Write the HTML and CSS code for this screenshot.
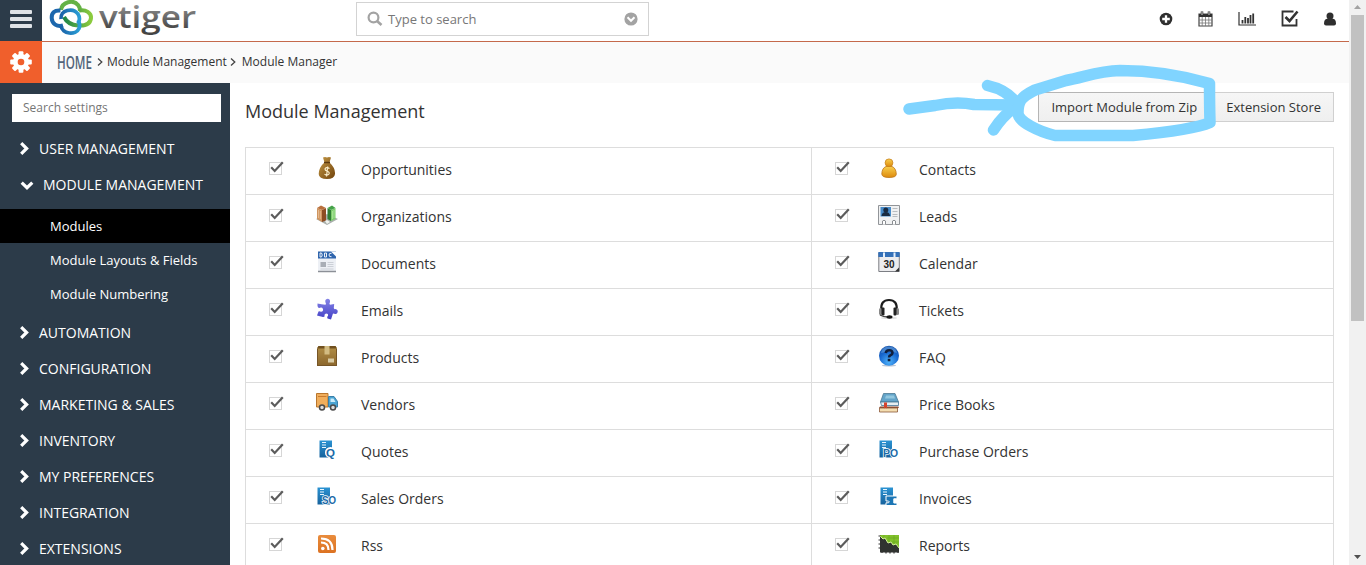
FILE: index.html
```html
<!DOCTYPE html>
<html lang="en">
<head>
<meta charset="utf-8">
<title>Module Manager</title>
<link rel="stylesheet" href="styles.css">
</head>
<body>
<svg class="defs" width="0" height="0">
  <defs>
    <linearGradient id="gGrey" x1="0" y1="0" x2="0" y2="1"><stop offset="0.15" stop-color="#9a9a9a"/><stop offset="0.85" stop-color="#444"/></linearGradient>
    <linearGradient id="gLeft" x1="0" y1="0" x2="1" y2="0"><stop offset="0" stop-color="#1b62a8"/><stop offset="1" stop-color="#2a9fd6"/></linearGradient>
    <linearGradient id="gRight" x1="0" y1="0" x2="1" y2="0"><stop offset="0" stop-color="#1d8448"/><stop offset="1" stop-color="#8ccb3e"/></linearGradient>
    <linearGradient id="gBag" x1="0" y1="0" x2="1" y2="1"><stop offset="0" stop-color="#c69a46"/><stop offset="1" stop-color="#71430c"/></linearGradient>
    <linearGradient id="gGold" x1="0" y1="0" x2="0" y2="1"><stop offset="0" stop-color="#f9cf4e"/><stop offset="1" stop-color="#dd8a0c"/></linearGradient>
    <linearGradient id="gPuzzle" x1="0" y1="0" x2="0" y2="1"><stop offset="0" stop-color="#8584e6"/><stop offset="1" stop-color="#4340c6"/></linearGradient>
    <linearGradient id="gBox" x1="0" y1="0" x2="0" y2="1"><stop offset="0" stop-color="#b39048"/><stop offset="1" stop-color="#8b662c"/></linearGradient>
    <linearGradient id="gBlue" x1="0" y1="0" x2="0" y2="1"><stop offset="0" stop-color="#2b93d3"/><stop offset="1" stop-color="#17629c"/></linearGradient>
    <radialGradient id="gFaq" cx="0.5" cy="0.8" r="0.8"><stop offset="0" stop-color="#4fb3fb"/><stop offset="0.6" stop-color="#1767cf"/><stop offset="1" stop-color="#1550a8"/></radialGradient>
    <linearGradient id="gRss" x1="0" y1="0" x2="0" y2="1"><stop offset="0" stop-color="#e98c3d"/><stop offset="1" stop-color="#dc7222"/></linearGradient>
  </defs>
  <symbol id="check" viewBox="0 0 16 14">
    <rect x="0.5" y="1.5" width="12" height="12" fill="#fff" stroke="#d6d6d6"/>
    <path d="M2.2 6.300 L5.700 10 L13.800 1.200" fill="none" stroke="#5c5c5c" stroke-width="2.200"/>
  </symbol>
  <symbol id="chev" viewBox="0 0 9 13"><path d="M1.2 1.2 6.6 6.5 1.2 11.8" fill="none" stroke="#fff" stroke-width="3.2"/></symbol>
  <symbol id="money" viewBox="0 0 22 22">
    <path d="M7 .5 Q9 -.5 11 .5 Q13 -.5 15 .5 L13.500 5.500 Q19.500 11 19 17 Q18.500 22 11 22 Q3 22 2.700 17 Q3 10 8.500 5.500Z" fill="url(#gBag)"/>
    <path d="M8 5.500h6" stroke="#5c3a10" stroke-width="1.500"/>
    <path d="M13.500 11.500 Q10 9.500 9 12 Q9 13.500 11 14 Q13.800 15 13 17 Q11.500 19 8.500 17.300 M11.700 9.500 L10.500 19.500" fill="none" stroke="#fbeecb" stroke-width="1.200"/>
  </symbol>
  <symbol id="buildings" viewBox="0 0 22 22">
    <path d="M0 15 11 21 22 15 11 10Z" fill="#aab0ac"/>
    <path d="M1 4 6 6 6 18 1 15Z" fill="#cf9560"/><path d="M6 6 10 4 10 16.500 6 18Z" fill="#8d4d23"/><path d="M1 4 5 1.500 10 4 6 6Z" fill="#b96f3b"/>
    <path d="M11.500 4 15 6 15 17 11.500 15Z" fill="#2f7e35"/><path d="M15 6 19.500 4 19.500 15 15 17Z" fill="#7dce6c"/><path d="M11.500 4 16 1.500 19.500 4 15 6Z" fill="#45a249"/>
    <path d="M2.500 6v8M4.300 7v8" stroke="#f1d2ad" stroke-width=".6"/><path d="M16.500 7v8M18 6v8" stroke="#c2efb2" stroke-width=".6"/>
    <path d="M9 17 11 16 14 18 11 20Z" fill="#f0f3ef"/>
  </symbol>
  <symbol id="doc" viewBox="0 0 22 22">
    <path d="M2 0.500h18v20.500H2z" fill="#edf0f5"/><path d="M2 20.500h18" stroke="#8c9097" stroke-width="1.500"/><path d="M2 0.500h18V7.500H2z" fill="#2f65ad"/>
    <path d="M15 .5h5v5z" fill="#fff"/>
    <path d="M4 2v4h1.500q1.500-2 0-4zM8.500 2h2v4h-2zM15.500 2.300q-2.500-.5-2.500 1.700t2.500 1.700" fill="none" stroke="#fff" stroke-width=".9"/>
    <path d="M4.500 11h5.500v5H4.500z" fill="#a9aeb6"/><path d="M11.500 11.500h6M11.500 13.500h6M11.500 15.500h6M4.500 18h13" stroke="#ccd0d7"/>
  </symbol>
  <symbol id="puzzle" viewBox="0 0 22 22">
    <path d="M5.500 6.300 9.500 6.800 Q10.500 6 9.500 4.500 Q8.500 1.500 11.500 .8 Q14.500 1 14 4 Q12.800 6 14 6.700 L18.200 6 17.800 10 Q18 11.500 19.500 11 Q22 11.500 21.700 14 Q21 16.800 18.300 15.700 Q16.800 15 16.500 17 L15 21.500 11.500 20.500 Q10.500 19 12 17.800 Q12.500 15.500 10 15.500 Q8 16 8.500 18 Q9 19 7 19 L1 17.500 2.500 13.500 Q3.500 13 5 13.800 Q7.500 13.500 7 11 Q6 9 4 9.800 Q2 10.500 1.500 8 L1.500 5.500Z" fill="url(#gPuzzle)"/>
  </symbol>
  <symbol id="box" viewBox="0 0 22 22">
    <path d="M2.500 1h17l1.500 2.500v17.500H1V3.500z" fill="url(#gBox)"/><path d="M2.500 1h17l1.500 2.500H1z" fill="#70501f"/><path d="M1.500 4v16.500h19V4" fill="none" stroke="#765527"/>
    <path d="M8.500 1h5v8.500h-5z" fill="#d3bc82"/><path d="M12 13.500h6v4h-6z" fill="#d9cba5"/>
  </symbol>
  <symbol id="truck" viewBox="0 0 22 22">
    <path d="M.5 1.500h11.500v13.500H.5z" fill="#f0ae5c" stroke="#b9762d"/><path d="M2 4.500h8.500" stroke="#ca7b2d"/>
    <path d="M12.500 4.500h5.500l3.500 5v5.500h-9z" fill="#4ba4d3" stroke="#3a7fa8"/><path d="M14.500 6.500h3l2 3.500h-5z" fill="#ccecfa"/>
    <circle cx="6" cy="15.500" r="2.500" fill="#dedede" stroke="#4a4a4a" stroke-width="1.500"/><circle cx="17" cy="15.500" r="2.500" fill="#dedede" stroke="#4a4a4a" stroke-width="1.500"/>
  </symbol>
  <symbol id="server" viewBox="0 0 22 22">
    <path d="M1.500 1.500H14V18.500H1.500z" fill="url(#gBlue)"/><path d="M4 3.500h4M4 6h4M4 8.500h4" stroke="#e9f6ff"/>
  </symbol>
  <symbol id="rss" viewBox="0 0 22 22">
    <rect x="2" y="2" width="18" height="18" rx="2" fill="url(#gRss)"/><circle cx="6.800" cy="15.500" r="1.800" fill="#fff"/>
    <path d="M5 9.500q7.500 0 7.500 7.500M5 5.500q11.500 0 11.500 11.500" fill="none" stroke="#fff" stroke-width="2.200"/>
  </symbol>
  <symbol id="person" viewBox="0 0 22 22">
    <path d="M8 9.500 Q4 11 3.800 17 Q4 20.500 11 20.500 Q18.500 20.500 18.300 17 Q18 11 14 9.500Z" fill="url(#gGold)" stroke="#bd7414" stroke-width=".8"/>
    <circle cx="11" cy="5.800" r="3.900" fill="url(#gGold)" stroke="#c9831b" stroke-width=".8"/>
  </symbol>
  <symbol id="idcard" viewBox="0 0 22 22">
    <path d="M.5 1.500h21v19H.5z" fill="#f0f1f2" stroke="#929599"/><path d="M2.500 3h10.500v9.500H2.500z" fill="#468ac8"/>
    <circle cx="7.800" cy="6" r="2.500" fill="#192b41"/><path d="M3.500 12q.5-4 4.300-4t4.300 4z" fill="#192b41"/>
    <path d="M14.500 4.500h5M14.500 7.500h5M14.500 10.500h5M14.500 12.500h5" stroke="#b8bcc0"/>
    <path d="M4.500 20.500v-3.500q1.500-1.500 3 0v3.500M14.500 20.500v-3.500q1.500-1.500 3 0v3.500" fill="#fff" stroke="#8b8e92"/>
  </symbol>
  <symbol id="cal" viewBox="0 0 22 22">
    <path d="M.8 2h20.500v18.500H.8z" fill="#ececee" stroke="#7c7e84"/><path d="M.3 1h21.400v5H.3z" fill="#3470b8"/>
    <path d="M6 1.500v4.500M16.500 1.500v4.500" stroke="#e2eefb" stroke-width="2"/><path d="M21 16.500v4h-4z" fill="#333"/>
  </symbol>
  <symbol id="headset" viewBox="0 0 22 22">
    <ellipse cx="11" cy="20" rx="8" ry="1" fill="#ddd"/>
    <path d="M3.300 12Q2.500 2 11 2T18.700 12" fill="none" stroke="#1c1c1c" stroke-width="2.200"/>
    <rect x="1" y="10" width="3" height="7" rx="1.500" fill="#888"/><rect x="3.500" y="9.500" width="3" height="8" rx="1" fill="#222"/>
    <rect x="18" y="10" width="3" height="7" rx="1.500" fill="#888"/><rect x="15.500" y="9.500" width="3" height="8" rx="1" fill="#222"/>
    <path d="M2 17Q5 19 10 19" fill="none" stroke="#444" stroke-width="1.300"/><ellipse cx="11.500" cy="19" rx="3" ry="1.700" fill="#161616"/>
  </symbol>
  <symbol id="faq" viewBox="0 0 22 22">
    <ellipse cx="11" cy="20.500" rx="7" ry="1" fill="#b9c5d5"/><circle cx="11" cy="10.700" r="10" fill="url(#gFaq)"/><path d="M3 8Q4 1.500 11 1.500T19 8Q12 5 3 8Z" fill="#8bc4ef" opacity=".4"/>
    <path d="M7.700 8Q8 5.300 11.200 5.300T14.500 8Q14.500 9.500 12.500 10.200 11 10.700 11 12.500" fill="none" stroke="#101f3d" stroke-width="2.500"/><path d="M9.700 13.800h2.700v2.500H9.700z" fill="#101f3d"/>
  </symbol>
  <symbol id="books" viewBox="0 0 22 22">
    <path d="M5.500 1.500 17 1.500 20.500 10 2.500 10Z" fill="#63a4c9" stroke="#4b7892" stroke-width=".8"/><path d="M8 3.500h8l1 3H7z" fill="#92c7df"/>
    <path d="M2.500 10h18v3.500h-17z" fill="#e6eef1" stroke="#427393" stroke-width=".8"/>
    <path d="M2 14.500h18.500l.3 1.500H1z" fill="#8c4b31"/><path d="M1.500 16h18v4h-18z" fill="#f3ddb0" stroke="#8b5838" stroke-width=".8"/><path d="M6 10.500h3v6l-1.500-1.300L6 16.500z" fill="#d7432b"/>
  </symbol>
  <symbol id="report" viewBox="0 0 22 22">
    <path d="M2 2h19v16H2z" fill="#82c12b"/><path d="M6 2v4M11 2v7M16 2v9M9 5h12M14 9h7" stroke="#6aaa20" stroke-width=".7"/>
    <path d="M2 3l3 3 2-1 3 5 3-1 2 3 3-1 3 4v4.500H2z" fill="#303330"/>
    <path d="M2 3l3 3 2-1 3 5 3-1 2 3 3-1 3 4" fill="none" stroke="#d4f19a"/>
    <path d="M.5 3h2M.5 7h2M.5 11h2M.5 15h2M4 18v2M8 18v2.500M12 18v2.500M16 18v2.500M20 18v2" stroke="#333" stroke-width="1.200"/>
  </symbol>
</svg>

<div class="window">
  <div class="page">
    <header class="topbar">
      <div class="burger"><i></i><i></i><i></i></div>
      <svg class="logo" width="150" height="40" viewBox="0 0 150 40">
        <g fill="none" stroke-width="4">
          <path d="M12 10 C13 2 24 -1 29 5 C31 7 31 9 31 11" stroke="#64b246"/>
          <path d="M11.500 10.500 C5 10 2.500 13 2.700 18 C3 24 8 27 14 25.500" stroke="#1c67ad"/>
          <path d="M30 10.500 C37 9 42.500 13 42 18 C41.500 24 36 26 29 25.500 C21 25 17 21 15 17" stroke="url(#gRight)"/>
          <path d="M12 25.500 C13 34.500 27 35.500 30 28.500 C31 26 31 23 29 20 M12 19 C11 10 24 7 29 14 C31 17 31 20 29 24" stroke="url(#gLeft)" stroke-width="3.700"/>
        </g>
        <text class="logo-word" x="50" y="27.500" textLength="97" lengthAdjust="spacingAndGlyphs">vtiger</text>
      </svg>
      <div class="search">
        <svg width="16" height="16" viewBox="0 0 16 16"><circle cx="6.500" cy="6.500" r="4.900" fill="none" stroke="#a3a3a3" stroke-width="2.200"/><path d="M10 10l4.500 4" stroke="#a3a3a3" stroke-width="2.600"/></svg>
        <span>Type to search</span>
        <svg width="14" height="14" viewBox="0 0 14 14"><circle cx="7" cy="7" r="6.600" fill="#a3a3a3"/><path d="M3.500 5.300 7 8.800l3.500-3.500" fill="none" stroke="#fff" stroke-width="2"/></svg>
      </div>
      <nav class="tools">
        <svg width="14" height="14" viewBox="0 0 14 14"><circle cx="7" cy="7" r="6.300" fill="#2f2f2f"/><path d="M7 3.200v7.600M3.200 7h7.600" stroke="#fff" stroke-width="2.300"/></svg>
        <svg width="15" height="16" viewBox="0 0 15 16"><path d="M1 3h13v12H1z" fill="#fff" stroke="#444" stroke-width="1.200"/><path d="M1 3h13v3H1z" fill="#333"/><path d="M4.200 6v9M7.500 6v9M10.800 6v9M1 9h13M1 12h13" stroke="#777" stroke-width=".8"/><path d="M4 .5v4M11 .5v4" stroke="#333" stroke-width="2.500"/><path d="M4 1v3M11 1v3" stroke="#fff" stroke-width=".8"/></svg>
        <svg width="18" height="14" viewBox="0 0 18 14"><path d="M1 0v13h17" fill="none" stroke="#333" stroke-width="1.200"/><path d="M4.500 8v3.500M7.300 5v6.500M10 6v5.500M12.500 3v8.500M15.200 1.500v10" stroke="#333" stroke-width="1.800"/></svg>
        <svg width="18" height="17" viewBox="0 0 18 17"><path d="M12.500 1.500H1.500v14h14V9" fill="none" stroke="#333" stroke-width="1.800"/><path d="M4.500 7l4 4 8-9.500" fill="none" stroke="#333" stroke-width="2.600"/></svg>
        <svg width="12" height="14" viewBox="0 0 12 14"><path d="M3.500 6.800Q0 7 0 11.500 0 13.500 2 13.500h8q2 0 2-2Q12 7 8.500 6.800Z" fill="#2f2f2f"/><circle cx="6" cy="4" r="3.500" fill="#2f2f2f"/></svg>
      </nav>
    </header>

    <div class="crumbbar">
      <div class="gear"><svg width="22" height="22" viewBox="-11 -11 22 22"><g fill="#fff"><circle r="8"/><g id="teeth"><rect x="-2.400" y="-10.800" width="4.800" height="21.600" rx="1"/><rect x="-10.800" y="-2.400" width="21.600" height="4.800" rx="1"/></g><use href="#teeth" transform="rotate(45)"/></g><circle r="3.300" fill="#f05f2c"/></svg></div>
      <svg class="home" width="35" height="26" viewBox="0 0 35 26"><text x="0" y="19.500" textLength="35" lengthAdjust="spacingAndGlyphs">HOME</text></svg>
      <svg class="sep" width="6" height="8" viewBox="0 0 6 8"><path d="M1 .5 4.800 4 1 7.500" fill="none" stroke="#444" stroke-width="1.300"/></svg>
      <span class="crumb">Module Management</span>
      <svg class="sep tight" width="6" height="8" viewBox="0 0 6 8"><path d="M1 .5 4.800 4 1 7.500" fill="none" stroke="#444" stroke-width="1.300"/></svg>
      <span class="crumb">Module Manager</span>
    </div>

    <div class="body">
      <aside class="sidebar">
        <div class="side-search">Search settings</div>
        <div class="group"><svg><use href="#chev"/></svg>USER MANAGEMENT</div>
        <div class="group open"><svg viewBox="0 0 13 9"><path d="M1.200 1.700 6.500 6.700 11.800 1.700" fill="none" stroke="#fff" stroke-width="3.200"/></svg>MODULE MANAGEMENT</div>
        <div class="sub">
          <div class="active">Modules</div>
          <div>Module Layouts &amp; Fields</div>
          <div>Module Numbering</div>
        </div>
        <div class="group"><svg><use href="#chev"/></svg>AUTOMATION</div>
        <div class="group"><svg><use href="#chev"/></svg>CONFIGURATION</div>
        <div class="group"><svg><use href="#chev"/></svg>MARKETING &amp; SALES</div>
        <div class="group"><svg><use href="#chev"/></svg>INVENTORY</div>
        <div class="group"><svg><use href="#chev"/></svg>MY PREFERENCES</div>
        <div class="group"><svg><use href="#chev"/></svg>INTEGRATION</div>
        <div class="group"><svg><use href="#chev"/></svg>EXTENSIONS</div>
      </aside>

      <main class="content">
        <div class="heading">
          <h1>Module Management</h1>
          <div class="buttons"><div class="btn first">Import Module from Zip</div><div class="btn">Extension Store</div></div>
        </div>
        <div class="modules">
          <div class="cell"><svg class="cb"><use href="#check"/></svg><svg class="ic"><use href="#money"/></svg><span>Opportunities</span></div>
          <div class="cell"><svg class="cb"><use href="#check"/></svg><svg class="ic"><use href="#person"/></svg><span>Contacts</span></div>
          <div class="cell"><svg class="cb"><use href="#check"/></svg><svg class="ic"><use href="#buildings"/></svg><span>Organizations</span></div>
          <div class="cell"><svg class="cb"><use href="#check"/></svg><svg class="ic"><use href="#idcard"/></svg><span>Leads</span></div>
          <div class="cell"><svg class="cb"><use href="#check"/></svg><svg class="ic"><use href="#doc"/></svg><span>Documents</span></div>
          <div class="cell"><svg class="cb"><use href="#check"/></svg><svg class="ic"><use href="#cal"/><text x="11" y="17" class="cal-num">30</text></svg><span>Calendar</span></div>
          <div class="cell"><svg class="cb"><use href="#check"/></svg><svg class="ic"><use href="#puzzle"/></svg><span>Emails</span></div>
          <div class="cell"><svg class="cb"><use href="#check"/></svg><svg class="ic"><use href="#headset"/></svg><span>Tickets</span></div>
          <div class="cell"><svg class="cb"><use href="#check"/></svg><svg class="ic"><use href="#box"/></svg><span>Products</span></div>
          <div class="cell"><svg class="cb"><use href="#check"/></svg><svg class="ic"><use href="#faq"/></svg><span>FAQ</span></div>
          <div class="cell"><svg class="cb"><use href="#check"/></svg><svg class="ic"><use href="#truck"/></svg><span>Vendors</span></div>
          <div class="cell"><svg class="cb"><use href="#check"/></svg><svg class="ic"><use href="#books"/></svg><span>Price Books</span></div>
          <div class="cell"><svg class="cb"><use href="#check"/></svg><svg class="ic"><use href="#server" x="2" width="22" height="22"/><circle cx="14.500" cy="13.500" r="5.500" fill="#fff"/><text class="tag" x="10" y="18">Q</text></svg><span>Quotes</span></div>
          <div class="cell"><svg class="cb"><use href="#check"/></svg><svg class="ic"><use href="#server" width="22" height="22"/><text class="tag" x="5" y="18" textLength="15" lengthAdjust="spacingAndGlyphs">PO</text></svg><span>Purchase Orders</span></div>
          <div class="cell"><svg class="cb"><use href="#check"/></svg><svg class="ic"><use href="#server" width="22" height="22"/><text class="tag" x="6" y="18" textLength="14" lengthAdjust="spacingAndGlyphs">SO</text></svg><span>Sales Orders</span></div>
          <div class="cell"><svg class="cb"><use href="#check"/></svg><svg class="ic"><use href="#server" x="1" width="22" height="22"/><path d="M8 10h11v2.800h-3.200v4.200h3.200v2.500H8V16.800h2.500q1.500-1 0-1.800H8Z" fill="#1c76b5" stroke="#fff" stroke-width="1"/></svg><span>Invoices</span></div>
          <div class="cell"><svg class="cb"><use href="#check"/></svg><svg class="ic"><use href="#rss"/></svg><span>Rss</span></div>
          <div class="cell"><svg class="cb"><use href="#check"/></svg><svg class="ic"><use href="#report"/></svg><span>Reports</span></div>
        </div>
      </main>
    </div>
  </div>
  <div class="scrollbar">
    <svg width="17" height="15" viewBox="0 0 17 15"><path d="M5 9h7L8.500 5z" fill="#a3a3a3"/></svg>
    <div class="thumb"></div>
    <svg class="down" width="17" height="15" viewBox="0 0 17 15"><path d="M5 5h7L8.500 9z" fill="#505050"/></svg>
  </div>
  <svg class="marker" width="330" height="90" viewBox="895 55 330 90">
    <g fill="none" stroke="#80d4ff" stroke-width="11.500" stroke-linecap="round" stroke-linejoin="round">
      <path d="M909 109 L935 105.500 Q956 101 974 104.500 L1014 105"/>
      <path d="M987.500 85.500 Q1008 90 1018 105 Q1003 115 993.500 130"/>
      <path d="M1209.500 83.500 C1180 75 1150 70.500 1120 70.500 C1098 71 1085 77 1066 80.500 L1035 90 C1021 97 1018 101 1018 113 C1018 122 1040 132 1055 135.500 L1133 135.500 C1165 132.500 1195 129 1210 122.500 Q1209.500 105 1209.500 83.500"/>
    </g>
  </svg>
</div>
</body>
</html>
```
FILE: styles.css
```css
* { box-sizing: border-box; }
body { margin: 0; background: #fff; color: #333; font-family: "Open Sans", "Noto Sans", sans-serif; font-size: 14px; }
svg { flex: none; display: block; }
.defs { position: absolute; }
.window { position: relative; display: flex; width: 1366px; height: 565px; overflow: hidden; }
.page { width: 1349px; display: flex; flex-direction: column; }

.topbar { flex: none; height: 41px; display: flex; }
.burger { width: 42px; height: 41px; background: #2c3b49; display: flex; flex-direction: column; align-items: center; gap: 3px; padding-top: 10px; }
.burger i { width: 22px; height: 4px; border-radius: 1px; background: #dfe3e7; }
.logo { margin-left: 7px; }
.logo-word { font-family: "Open Sans", sans-serif; font-size: 31px; font-weight: 600; fill: url(#gGrey); }
.search { margin: 2px 0 0 157px; width: 293px; height: 34px; border: 1px solid #d3d3d3; display: flex; align-items: center; padding: 0 10px; color: #777; font-size: 13px; }
.search span { margin-left: 5px; flex: 1; }
.tools { margin: 0 13px 4px auto; display: flex; align-items: center; gap: 25px; }

.crumbbar { flex: none; height: 42px; display: flex; align-items: center; border-top: 1px solid #c4694b; background: #fafafa; font-size: 12px; padding-bottom: 2px; }
.gear { width: 42px; height: 42px; margin: -1px 0 -2px; background: #f05f2c; display: flex; align-items: center; justify-content: center; }
.home { margin-left: 15px; }
.home text { font-family: "Open Sans", sans-serif; font-size: 18px; font-weight: 600; fill: #53657a; }
.sep { margin: 0 4px 0 5px; }
.sep.tight { margin: 0 6px 0 3px; }
.crumb { color: #333; }

.body { flex: 1; min-height: 0; display: flex; }
.sidebar { width: 230px; background: #2c3b49; color: #fff; padding-top: 11px; overflow: hidden; }
.side-search { margin: 0 9px 9px 12px; height: 28px; background: #fff; color: #757575; font-size: 12px; line-height: 27px; padding-left: 11px; }
.group { height: 36px; display: flex; align-items: center; padding: 0 0 2px 20px; white-space: nowrap; }
.group svg { width: 9px; height: 13px; margin-right: 10px; }
.group.open svg { width: 14px; height: 9px; margin: 3px 9px 0 0; }
.sub { margin: 6px 0 4px; font-size: 13px; }
.sub div { height: 34px; line-height: 34px; padding-left: 50px; }
.sub .active { background: #000; }

.content { flex: 1; padding: 0 15px; }
.heading { height: 64px; display: flex; justify-content: space-between; }
h1 { margin: 15px 0 0; font-size: 18px; line-height: 26px; font-weight: 400; }
.buttons { display: flex; padding-top: 9px; }
.btn { height: 30px; border: 1px solid #d0d0d0; background: linear-gradient(#f6f6f6, #efefef); padding: 0 12px; line-height: 28px; font-size: 13px; }
.btn.first { border-color: #b5b5b5; margin-right: 3px; }
.modules { display: grid; grid-template-columns: 566px 522px; width: 1089px; border: 1px solid #ddd; }
.cell { height: 47px; display: flex; align-items: center; padding-left: 23px; border-bottom: 1px solid #ddd; }
.cell:nth-child(odd) { border-right: 1px solid #ddd; }
.cell span { padding-bottom: 4px; }
.cb { width: 16px; height: 14px; margin: 0 31px 6px 0; }
.ic { width: 22px; height: 22px; margin: 0 23px 6px 0; }
.cell:nth-child(even) .cb { margin-right: 27px; }
.cell:nth-child(even) .ic { margin-right: 19px; }
.cal-num { font: 700 10px "Liberation Sans", sans-serif; text-anchor: middle; fill: #222; }
.tag { font: 700 11.5px "Liberation Sans", sans-serif; fill: #1a6aa8; stroke: #fff; stroke-width: 1.6px; paint-order: stroke; }

.scrollbar { width: 17px; background: #f1f1f1; display: flex; flex-direction: column; }
.thumb { width: 13px; height: 306px; margin-left: 2px; background: #c1c1c1; }
.down { margin-top: auto; }
.marker { position: absolute; left: 895px; top: 55px; }
```
